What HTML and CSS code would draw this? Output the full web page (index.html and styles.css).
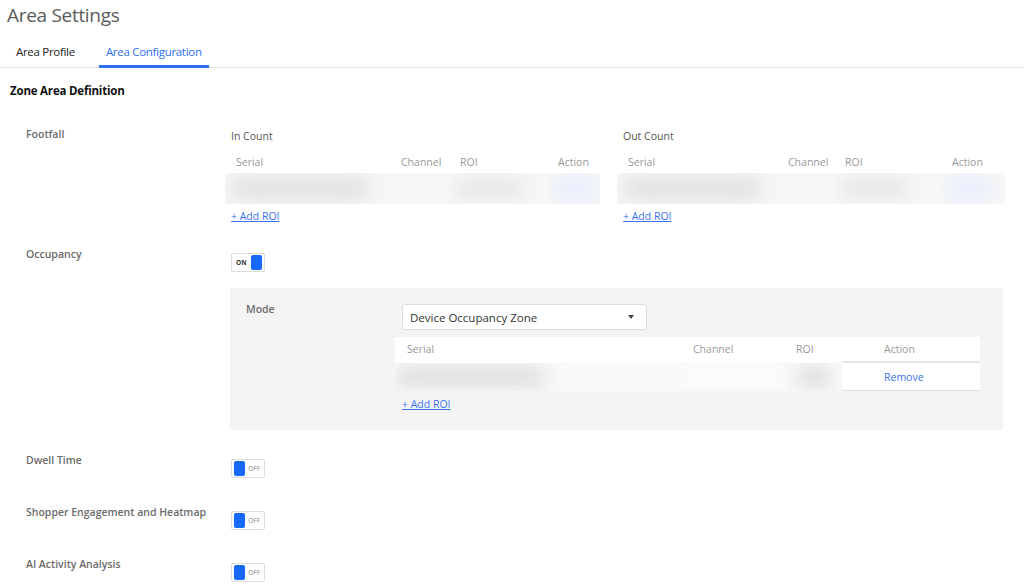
FILE: index.html
```html
<!DOCTYPE html>
<html lang="en">
<head>
    <meta charset="UTF-8">
    <meta name="viewport" content="width=device-width, initial-scale=1.0">
    <title>Area Settings</title>
    <link rel="stylesheet" href="styles.css">
</head>
<body>
    <h1 class="page-title">Area Settings</h1>

    <div class="tabs">
        <a class="tab">Area Profile</a>
        <a class="tab active">Area Configuration</a>
    </div>

    <h2 class="zone-title">Zone Area Definition</h2>

    <!-- Footfall -->
    <div class="setting-row footfall-row">
        <div class="setting-label">Footfall</div>
        <div class="footfall">
            <div class="count-col in-col">
                <div class="count-caption">In Count</div>
                <div class="roi-table">
                    <div class="roi-head">
                        <span class="c-serial">Serial</span>
                        <span class="c-channel">Channel</span>
                        <span class="c-roi">ROI</span>
                        <span class="c-action">Action</span>
                    </div>
                    <div class="roi-row">
                        <span class="c-serial"><i class="blur b-serial"></i></span>
                        <span class="c-channel"></span>
                        <span class="c-roi"><i class="blur b-roi"></i></span>
                        <span class="c-action"><i class="blur b-action"></i></span>
                    </div>
                </div>
                <a class="add-roi">+ Add ROI</a>
            </div>
            <div class="count-col out-col">
                <div class="count-caption">Out Count</div>
                <div class="roi-table">
                    <div class="roi-head">
                        <span class="c-serial">Serial</span>
                        <span class="c-channel">Channel</span>
                        <span class="c-roi">ROI</span>
                        <span class="c-action">Action</span>
                    </div>
                    <div class="roi-row">
                        <span class="c-serial"><i class="blur b-serial"></i></span>
                        <span class="c-channel"></span>
                        <span class="c-roi"><i class="blur b-roi"></i></span>
                        <span class="c-action"><i class="blur b-action"></i></span>
                    </div>
                </div>
                <a class="add-roi">+ Add ROI</a>
            </div>
        </div>
    </div>

    <!-- Occupancy -->
    <div class="setting-row occupancy-row">
        <div class="setting-label">Occupancy</div>
        <div>
            <div class="toggle on"><span class="toggle-text">ON</span><span class="knob"></span></div>
        </div>
    </div>

    <div class="occupancy-panel">
        <div class="setting-label">Mode</div>
        <div class="panel-body">
            <div class="select">
                <span>Device Occupancy Zone</span>
                <span class="caret"></span>
            </div>
            <div class="occ-table">
                <div class="occ-head">
                    <span class="o-serial">Serial</span>
                    <span class="o-channel">Channel</span>
                    <span class="o-roi">ROI</span>
                    <span class="o-action">Action</span>
                </div>
                <div class="occ-row">
                    <span class="o-serial"><i class="blur ob-serial"></i></span>
                    <span class="o-channel"><i class="blur ob-channel"></i></span>
                    <span class="o-roi"><i class="blur ob-roi"></i></span>
                    <span class="o-action"><a class="remove">Remove</a></span>
                </div>
            </div>
            <a class="add-roi">+ Add ROI</a>
        </div>
    </div>

    <!-- Other toggles -->
    <div class="setting-row toggle-row">
        <div class="setting-label">Dwell Time</div>
        <div><div class="toggle off"><span class="knob"></span><span class="toggle-text">OFF</span></div></div>
    </div>
    <div class="setting-row toggle-row">
        <div class="setting-label">Shopper Engagement and Heatmap</div>
        <div><div class="toggle off"><span class="knob"></span><span class="toggle-text">OFF</span></div></div>
    </div>
    <div class="setting-row toggle-row">
        <div class="setting-label">AI Activity Analysis</div>
        <div><div class="toggle off"><span class="knob"></span><span class="toggle-text">OFF</span></div></div>
    </div>
</body>
</html>
```

FILE: styles.css
```css
body {
    margin: 0;
    font-family: "Open Sans", "Noto Sans", Arial, sans-serif;
    font-size: 11px;
    color: #333;
    background: #fff;
    overflow: hidden;
}

.page-title {
    margin: 0;
    padding: 2px 7px 0;
    font-size: 19px;
    font-weight: 400;
    line-height: 26px;
    letter-spacing: -0.3px;
    color: #5a5a5a;
}

/* tabs */
.tabs {
    display: flex;
    gap: 17px;
    margin-top: 11px;
    padding-left: 9px;
    border-bottom: 1px solid #e2e2e2;
}

.tab {
    padding: 4px 7px 5px;
    font-size: 11.5px;
    letter-spacing: -0.3px;
    line-height: 18px;
    color: #222;
    border-bottom: 2px solid transparent;
    margin-bottom: -1px;
    cursor: pointer;
}

.tab.active {
    color: #2d6ff0;
    border-bottom: 3px solid #2d6ff0;
    padding-bottom: 4px;
}

.zone-title {
    margin: 15px 0 0;
    padding-left: 10px;
    font-size: 11.5px;
    line-height: 16px;
    font-weight: 700;
    letter-spacing: -0.2px;
    color: #111;
}

/* setting rows */
.setting-row {
    display: grid;
    grid-template-columns: 199px 1fr;
    padding-left: 26px;
}

.setting-label {
    font-weight: 600;
    color: #6b6b6b;
    font-size: 10.5px;
    line-height: 14px;
}

.footfall-row {
    margin-top: 28px;
}

.footfall {
    display: flex;
    gap: 17px;
}

.count-col.in-col { width: 375px; }
.count-col.out-col { width: 388px; }

.count-caption {
    padding-left: 6px;
    line-height: 18px;
    font-size: 10.5px;
    color: #555;
}

.roi-table {
    margin-top: 6px;
}

.roi-head, .roi-row {
    display: grid;
}

.in-col .roi-head, .in-col .roi-row {
    grid-template-columns: 165px 59px 98px 53px;
}

.out-col .roi-head, .out-col .roi-row {
    grid-template-columns: 160px 57px 107px 64px;
}

.roi-head span {
    padding-left: 11px;
    line-height: 22px;
    color: #999;
    font-size: 10.5px;
}

.roi-row {
    height: 31px;
    background: #f7f7f7;
    overflow: hidden;
}

.roi-row span {
    position: relative;
    overflow: hidden;
}

.blur {
    position: absolute;
    display: block;
    filter: blur(9px);
    border-radius: 10px;
}

.b-serial { left: 5px; top: 4px; width: 140px; height: 23px; background: #e2e2e2; }
.b-roi { left: 5px; top: 4px; width: 70px; height: 23px; background: #e8e8e8; }
.b-action { left: 6px; top: 4px; width: 44px; height: 23px; background: #e6edfc; }

.add-roi {
    display: block;
    margin-top: 3px;
    padding-left: 6px;
    line-height: 18px;
    color: #3a73f0;
    text-decoration: underline;
    font-size: 10.5px;
    cursor: pointer;
}

/* toggles */
.occupancy-row {
    margin-top: 22px;
}

.toggle {
    display: flex;
    align-items: center;
    justify-content: space-between;
    box-sizing: border-box;
    width: 34px;
    height: 19px;
    margin: 6px 0 0 6px;
    padding: 0 2px 0 4px;
    border: 1px solid #dcdcdc;
    border-radius: 2px;
    background: #fff;
}

.toggle.off {
    padding: 0 4px 0 2px;
}

.toggle-text {
    font-size: 6.5px;
    font-weight: 700;
    color: #333;
}

.toggle.off .toggle-text {
    font-weight: 400;
    color: #888;
}

.knob {
    width: 11px;
    height: 15px;
    border-radius: 2px;
    background: #1668ff;
}

/* occupancy panel */
.occupancy-panel {
    display: grid;
    grid-template-columns: 156px 1fr;
    margin: 16px 21px 0 230px;
    padding: 14px 23px 17px 16px;
    background: #f4f4f4;
}

.select {
    display: flex;
    align-items: center;
    justify-content: space-between;
    box-sizing: border-box;
    width: 245px;
    height: 26px;
    margin-top: 2px;
    padding: 0 12px 0 7px;
    border: 1px solid #dcdcdc;
    border-radius: 3px;
    background: #fff;
    font-size: 11.5px;
    color: #333;
}

.caret {
    width: 0;
    height: 0;
    border-left: 3px solid transparent;
    border-right: 3px solid transparent;
    border-top: 4px solid #444;
}

.occ-table {
    margin: 7px 0 0 -7px;
}

.occ-head, .occ-row {
    display: grid;
    grid-template-columns: 286px 103px 58px 138px;
}

.occ-head {
    background: #fff;
}

.occ-head span {
    padding-left: 12px;
    line-height: 24px;
    color: #999;
    font-size: 10.5px;
}

.occ-head .o-action {
    padding-left: 42px;
    border-bottom: 2px solid #e6e6e6;
}

.occ-row {
    height: 28px;
}

.occ-row span {
    position: relative;
    overflow: hidden;
    background: #f9f9f9;
}

.ob-serial { left: 0; top: 2px; width: 150px; height: 24px; background: #e0e0e0; }
.ob-channel { left: 0; top: 2px; width: 103px; height: 24px; background: #fbfbfb; }
.ob-roi { left: 12px; top: 3px; width: 36px; height: 22px; background: #dedede; }

.occ-row .o-action {
    background: #fff;
    border-bottom: 1px solid #e2e2e2;
    padding-left: 42px;
    line-height: 27px;
}

.remove {
    color: #3a73f0;
    font-size: 10.5px;
    cursor: pointer;
}

.occupancy-panel .add-roi {
    margin-top: 4px;
    padding-left: 0;
}

.toggle-row {
    margin-top: 23px;
}

.toggle-row + .toggle-row {
    margin-top: 27px;
}
```
